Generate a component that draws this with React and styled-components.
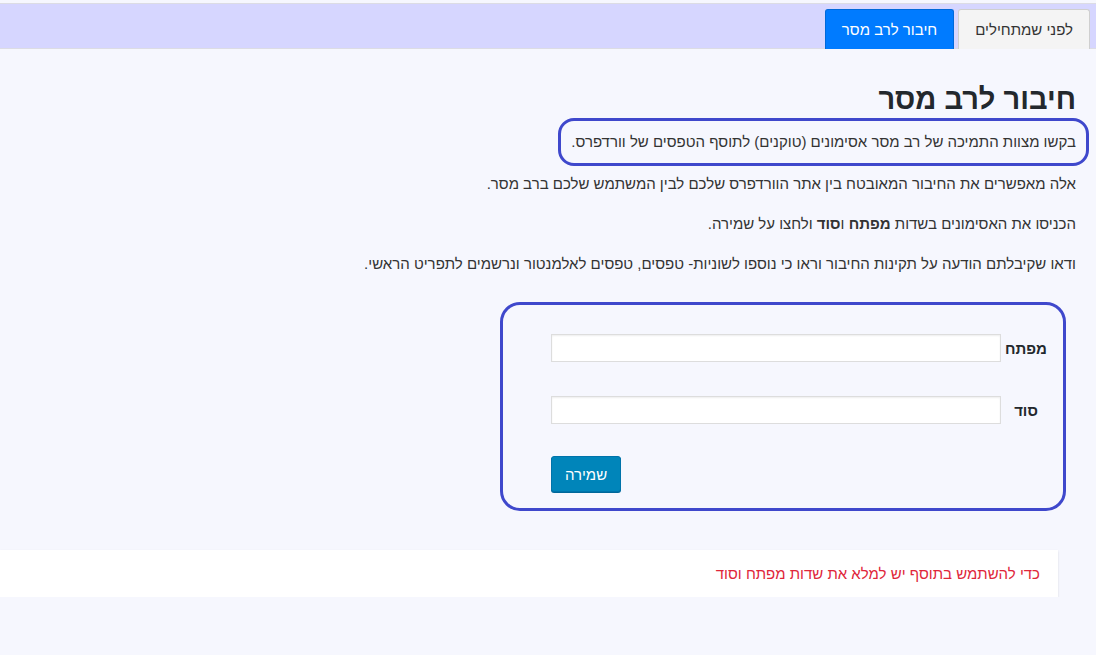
import styled, { createGlobalStyle } from 'styled-components'

/* GLOBAL */
const GlobalStyle = createGlobalStyle`
  body {
    margin: 0;
    background: #f6f7fe;
    direction: rtl;
    font-family: "Liberation Sans", Arial, "DejaVu Sans", sans-serif;
    font-size: 15px;
    color: #333;
  }
`

/* HEADER */
const TabBar = styled.div`
  margin-top: 3px;
  height: 44px;
  background: #d6d6ff;
  border-top: 1px solid #dcdce4;
  border-bottom: 1px solid #dcdce4;

  display: flex;
  align-items: flex-end;
  gap: 4px;
  padding-right: 6px;
`

const Tab = styled.div`
  height: 40px;
  box-sizing: border-box;
  margin-bottom: -1px;
  padding: 0 16px;

  display: flex;
  align-items: center;

  font-size: 15px;
  border: 1px solid ${({ $active }) => ($active ? '#0069d9' : '#cfcfcf')};
  border-bottom: none;
  border-radius: 3px 3px 0 0;
  background: ${({ $active }) => ($active ? '#007bff' : '#f4f4f4')};
  color: ${({ $active }) => ($active ? '#fff' : '#333')};
`

/* CONTENT */
const Main = styled.div`
  padding-right: 20px;
`

const Title = styled.h1`
  margin: 32px 0 1px;
  font-size: 29px;
  line-height: 36px;
  font-weight: bold;
  color: #23282d;
`

const Marked = styled.p`
  width: fit-content;
  margin: 0 -13px 0 0;
  padding: 0 10px;
  line-height: 42px;
  border: 3px solid #3f48cc;
  border-radius: 16px;
`

const Text = styled.p`
  margin: ${({ $first }) => ($first ? '7px' : '18px')} 0 0;
  line-height: 22px;
`

/* FORM */
const FormBox = styled.div`
  width: 566px;
  box-sizing: border-box;
  margin: 27px 10px 0 0;
  padding: 29px 16px 16px 48px;
  border: 3px solid #3f48cc;
  border-radius: 20px;

  display: grid;
  grid-template-columns: 42px 450px;
  column-gap: 4px;
  row-gap: 34px;
  align-items: center;
`

const Label = styled.label`
  font-weight: bold;
  text-align: center;
  color: #23282d;
`

const Field = styled.input`
  height: 28px;
  box-sizing: border-box;
  margin: 0;
  border: 1px solid #ddd;
  background: #fff;
  box-shadow: inset 0 1px 2px rgba(0, 0, 0, 0.07);
`

const SaveButton = styled.button`
  grid-column: 2;
  justify-self: end;
  margin: -2px 1px 0 0;
  width: 70px;
  height: 36px;
  border: 1px solid #0073aa;
  border-radius: 3px;
  background: #0085ba;
  box-shadow: 0 1px 0 #006799;
  color: #fff;
  font-family: inherit;
  font-size: 15px;
`

/* NOTICE */
const Notice = styled.div`
  margin: 39px 18px 0 0;
  height: 47px;
  padding-right: 18px;

  display: flex;
  align-items: center;

  background: #fff;
  box-shadow: 0 1px 2px rgba(0, 0, 0, 0.12);
  color: #e0263a;
`

function App() {
  return (
    <>
      <GlobalStyle />

      {/* TABS */}
      <TabBar>
        <Tab>לפני שמתחילים</Tab>
        <Tab $active>חיבור לרב מסר</Tab>
      </TabBar>

      <Main>
        <Title>חיבור לרב מסר</Title>

        <Marked>
          בקשו מצוות התמיכה של רב מסר אסימונים (טוקנים) לתוסף הטפסים של
          וורדפרס.
        </Marked>
        <Text $first>
          אלה מאפשרים את החיבור המאובטח בין אתר הוורדפרס שלכם לבין המשתמש שלכם
          ברב מסר.
        </Text>
        <Text>
          הכניסו את האסימונים בשדות <b>מפתח</b> ו<b>סוד</b> ולחצו על שמירה.
        </Text>
        <Text>
          ודאו שקיבלתם הודעה על תקינות החיבור וראו כי נוספו לשוניות- טפסים,
          טפסים לאלמנטור ונרשמים לתפריט הראשי.
        </Text>

        {/* FORM */}
        <FormBox>
          <Label>מפתח</Label>
          <Field type="text" />
          <Label>סוד</Label>
          <Field type="text" />
          <SaveButton>שמירה</SaveButton>
        </FormBox>

        {/* NOTICE */}
        <Notice>כדי להשתמש בתוסף יש למלא את שדות מפתח וסוד</Notice>
      </Main>
    </>
  )
}

export default App
